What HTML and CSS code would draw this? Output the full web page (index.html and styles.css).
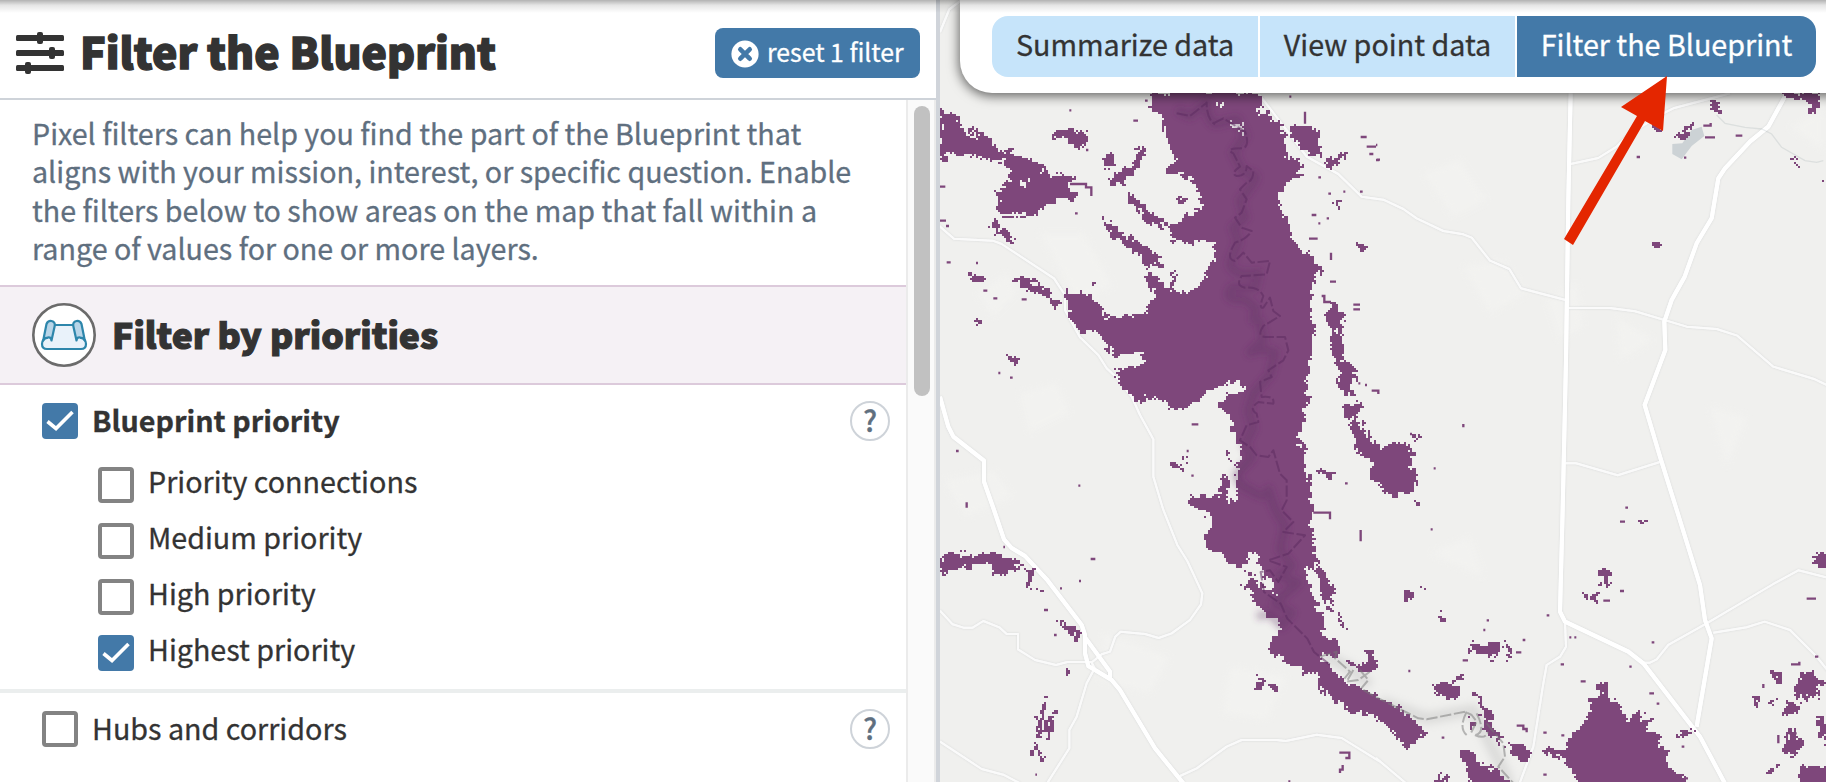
FILE: index.html
```
<!DOCTYPE html>
<html lang="en">
<head>
<meta charset="utf-8">
<title>Filter the Blueprint</title>
<link rel="stylesheet" href="styles.css">
</head>
<body>
<div class="app">
<aside class="sidebar">
  <header class="head">
    <svg class="sliders" viewBox="0 0 48 42"><g fill="#333"><rect y="3" width="48" height="6" rx="1.5"/><rect y="18" width="48" height="6" rx="1.5"/><rect y="33" width="48" height="6" rx="1.5"/><rect x="21" width="6" height="12" rx="2"/><rect x="33" y="15" width="6" height="12" rx="2"/><rect x="9" y="30" width="6" height="12" rx="2"/></g></svg>
    <h1>Filter the Blueprint</h1>
    <button class="reset"><svg viewBox="0 0 28 28"><circle cx="14" cy="14" r="13.6" fill="#fff"/><path d="M9.3 9.3l9.4 9.4M18.7 9.3l-9.4 9.4" stroke="#4379a8" stroke-width="4.6" stroke-linecap="round"/></svg><span>reset 1 filter</span></button>
  </header>
  <div class="scroller">
    <main class="content">
      <p class="intro">Pixel filters can help you find the part of the Blueprint that<br>aligns with your mission, interest, or specific question. Enable<br>the filters below to show areas on the map that fall within a<br>range of values for one or more layers.</p>
      <section class="group">
        <svg class="badge" viewBox="0 0 64 64"><circle cx="32" cy="32" r="30.7" fill="#fff" stroke="#6b6b6b" stroke-width="2.6"/><g stroke="#2d86ab" stroke-width="2.2" stroke-linejoin="round"><path fill="#e9f2fa" d="M20 22h24l5 13q5 1 5 6 0 5-5 5H15q-5 0-5-5 0-5 5-6z"/><path fill="#b8d5e8" d="M14.500 21q1.500-3.500 5-3 4 1 3.200 5l-3.200 14.500q-.5-4-4-3-3 0-4.300 3z"/><path fill="#b8d5e8" d="M49.500 21q-1.500-3.500-5-3-4 1-3.200 5l3.200 14.500q.5-4 4-3 3 0 4.300 3z"/></g></svg>
        <h2>Filter by priorities</h2>
      </section>
      <section class="filter on">
        <div class="row"><span class="box checked"><svg viewBox="0 0 36 36"><path d="M5.500 18.500l8.500 7L30.500 9"/></svg></span><strong>Blueprint priority</strong><span class="help">?</span></div>
        <ul>
          <li><span class="box"></span><span>Priority connections</span></li>
          <li><span class="box"></span><span>Medium priority</span></li>
          <li><span class="box"></span><span>High priority</span></li>
          <li><span class="box checked"><svg viewBox="0 0 36 36"><path d="M5.500 18.500l8.500 7L30.500 9"/></svg></span><span>Highest priority</span></li>
        </ul>
      </section>
      <section class="filter">
        <div class="row"><span class="box"></span><span class="label">Hubs and corridors</span><span class="help">?</span></div>
      </section>
    </main>
    <div class="track"><div class="thumb"></div></div>
  </div>
</aside>
<div class="map">
  <svg class="canvas" viewBox="940 0 886 782">
    <defs>
      <filter id="soft" x="-20%" y="-20%" width="140%" height="140%"><feGaussianBlur stdDeviation="9"/></filter>
      <g id="roads" fill="none" stroke-linejoin="round">
        <g class="minor">
          <path d="M30 96L58 28L95 0M28 678L72 716L188 722L215 732L372 835L405 885V930L450 1012L505 1065L530 1105L562 1135L605 1190L630 1245L670 1318V1430L700 1530L742 1635L772 1683L817 1780L813 1813L780 1860L725 1900L686 1914L645 1902L572 1895L556 1910L540 1955L515 1963L484 1988"/>
          <path d="M30 1832L68 1873L100 1883H128L160 1863L208 1882L230 1902H264V1948L315 1980L378 1995L412 1986H484L494 2005L470 2050L440 2150L418 2190V2245L345 2360M30 2225L155 2307L220 2324L270 2350M750 2328L800 2305L890 2240L935 2220H1040L1067 2223L1160 2204L1235 2214L1350 2285"/>
          <path d="M985 280L1035 345L1085 410L1130 470L1225 522L1295 590L1360 599L1420 627L1460 655L1540 693L1600 703L1625 713L1680 782L1738 807L1773 865L1910 901M1915 924H2040L2115 934L2270 980L2360 987L2422 1007L2530 1100L2655 1138L2700 1160M1922 492L2005 474L2060 440L2100 400L2200 340L2230 325L2400 280M1906 1390H1938L2063 1426L2190 1386"/>
          <path d="M1905 1868L1908 1940L1890 1970L1850 1995L1840 2050L1810 2240L1765 2360M2138 1988H2160L2180 1978L2215 1935L2330 1870L2530 1752L2605 1711L2700 1735M2350 1898L2450 1882L2504 1865L2580 1890L2660 1970L2700 2020M1338 2274L1440 2360"/>
        </g>
        <g class="major"><path d="M30 1190L55 1280L70 1310L162 1382V1445L192 1530L222 1618L245 1644L285 1668L350 1738L455 1875L465 1905V1960L475 1998L545 2040L570 2070L675 2245L760 2350M465 1912L540 2015V2040"/><path d="M1922 280L1915 600L1908 1080L1898 1530L1890 1835L1905 1865L2095 1955L2140 1990L2310 2210L2390 2360M2570 280L2515 380L2460 425L2385 505L2365 535L2345 655L2300 730L2264 830L2225 900L2203 965L2206 1050L2144 1215L2190 1370L2244 1542L2310 1755L2325 1860L2345 1915L2300 2180"/></g>
      </g>
    </defs>
    <rect x="940" width="886" height="782" fill="#f0f0ee"/>
    <g transform="translate(930) scale(.33333)">
      <g fill="#f4f4f2" opacity=".55" filter="url(#soft)"><path d="M330 700h130l90 160-110 40zM140 880l90-60 30 60-70 70zM270 1180l110-30 40 90-120 60zM40 1440l150-30 60 80-140 60zM520 1900l200 70-60 110-150-40zM1480 520l110-40 80 120-100 50zM1600 800l120-20 70 100-110 60zM2060 950l110 70-100 60zM1850 900l90-50 20 130-70 40zM2340 1220l110 30-60 150zM2580 380l100-50v120zM900 2000l170 30-60 130-130-20zM1500 1660l120-50 40 120z"/></g>
      <use href="#roads" class="casing"/><use href="#roads" class="fill"/>
      <path stroke="#2f4a58" stroke-opacity=".1" stroke-width="4" fill="none" d="M2360 345l25 25 60 12 50 5 30 15 30 40 70 40 35 5 20-5"/>
      <path fill="#ccd2d5" d="M2227 432v30l28 16 30-40 38-30-8-28-30 10-28 40z"/>
      <g class="shade"><path d="M1350 2105l140 50 140-25 60 120 30 60 40 110M1180 1965l80 40 60 50"/></g>
      <g class="land" id="land" fill="#7e477b">
        <path d="M668 275H990L985 335L1010 338L1045 378L1065 400L1068 470L1110 485L1115 518L1075 545L1040 580L1065 650L1085 700L1110 745L1150 770L1175 810L1145 850L1138 920L1155 980L1138 1060L1135 1200L1118 1235L1132 1262L1100 1310L1122 1340L1138 1440L1138 1540L1155 1660L1158 1695L1115 1710L1150 1790L1180 1850L1190 1905L1222 1925L1235 1980L1280 2005L1350 2095L1400 2120L1450 2160L1490 2200L1440 2230L1400 2215L1350 2140L1260 2130L1230 2085L1175 2060L1165 2010L1130 2030L1060 1980L1015 1950L1025 1920L1055 1905L1045 1868L985 1820L960 1775L930 1770L960 1735L950 1700L905 1695L870 1660L830 1640V1600L850 1560L830 1530L780 1520L785 1485L840 1490L870 1470L890 1410L900 1440L890 1500L920 1520L930 1340L905 1280L902 1240L850 1230L890 1200L900 1180L950 1165L910 1140L850 1165L780 1215L740 1238L690 1190L620 1200L580 1170L560 1110L620 1100L660 1080L610 1055L550 1070L515 1020L490 990L450 1010L410 930V880L460 872L515 920L530 960L645 940L670 900L680 860L780 880L830 820L860 770L850 725H730L715 705L775 640L820 630L800 550L745 515L712 530V500L735 485L715 440L700 370L685 335L655 330z"/>
        <path d="M30 315L90 370L110 400L180 430L225 465L290 485L345 520L435 530L440 545L400 550L435 575V610L395 595L340 620L300 650L230 650L200 640L215 600L195 590L205 565L250 550L225 480L180 475L100 460H50L45 500H30z"/>
        <path d="M110 385L150 390L190 425L170 425zM220 440L290 475L350 505L340 520L230 465zM200 640L215 680L250 710L235 722L185 685zM370 378L400 385L465 400V430L445 442L400 405L370 405zM510 475L545 470L550 500L530 500zM490 545H530L550 520L600 505L625 455L650 450L620 510L580 540L595 555L530 545zM590 570L640 620L710 670V685L650 665L590 595zM505 645L570 690L650 740L700 790L680 800L665 785L645 810L620 760L545 705zM715 670H745L730 690zM745 585L775 600L755 615zM1090 380H1135L1165 410L1150 430L1180 460L1160 475L1115 440L1080 405zM1185 490L1235 455L1245 470L1200 505zM1205 625L1240 600L1225 625zM1265 735L1320 730L1300 755z"/>
        <path d="M250 835H290L355 875L385 905L370 930L355 900L290 865zM108 820L145 825L158 845H120zM130 952H155L145 980zM240 1062H252L260 1090H240zM475 850l20-5-10 20zM655 820l40 20 10 30h-45zM728 815h10v70h-15zM1190 930L1215 910L1240 950L1225 1000L1240 1080L1260 1095L1282 1130L1260 1180L1245 1190L1225 1160L1230 1110L1205 1070L1210 1000L1190 970zM1245 1210H1295L1285 1250L1300 1285L1350 1350L1342 1460L1325 1455V1380L1280 1350L1262 1280L1265 1255L1245 1245z"/>
        <path d="M1338 1350H1360L1385 1325L1440 1340L1445 1390L1463 1430L1440 1480L1375 1490L1345 1450zM735 1390h20l10-10h20l-30 12v20h-20zM882 1340L900 1380L890 1385zM1160 1420l50-5v25z"/>
        <path d="M30 1665H180L210 1660L280 1700L255 1705L230 1725L195 1715L175 1685L130 1700L30 1725zM285 1710H312L300 1770L288 1760zM315 1768L355 1780L335 1783zM380 1857L435 1885L445 1910L432 1925L425 1900zM1165 1700L1205 1735L1215 1785L1200 1810L1225 1840L1270 1895L1220 1855L1175 1780zM375 2080L350 2105L340 2150L330 2210L320 2210L328 2150L343 2100L365 2080zM382 2118L364 2165L367 2195L345 2220L350 2160zM318 2225L315 2260L303 2270L306 2240zM333 2240h8v45h-8zM985 2025L1000 2060L980 2065zM1020 2050H1045V2080L1025 2070zM405 2022l15-15-4 18z"/>
        <path d="M1200 1970L1230 1960L1260 1995L1300 2015L1350 2005L1330 1950L1310 1950L1320 1985L1290 1990L1250 1985zM1165 2040L1280 2070L1340 2125L1400 2130L1350 2140H1260L1220 2100L1165 2065zM1375 2180L1440 2145L1490 2200L1460 2215L1440 2240L1415 2235zM1505 2050L1580 2045L1590 2095H1540zM1560 2025L1610 2030L1590 2040zM1615 2050L1650 2095L1695 2155L1680 2170L1710 2200L1720 2240L1680 2200L1660 2190V2150L1640 2095zM1610 2120L1635 2190L1625 2195zM1595 2250L1625 2255L1650 2295L1700 2310L1740 2360H1620V2310L1595 2280zM1530 2325h20v35h-25zM1730 2235L1795 2230L1800 2260L1785 2280L1740 2270z"/>
        <path d="M1615 1935L1660 1935L1695 1932L1710 1950L1685 1980L1650 1960L1620 1955zM1720 1928L1740 1935L1755 1970L1735 1972zM1422 1775L1455 1780L1440 1805H1425zM1475 1760L1495 1765H1475zM1533 1840L1545 1845V1870L1550 1880L1530 1860zM2010 1705H2035L2050 1735L2025 1760L2015 1740zM1990 1775L2010 1770L1995 1820zM1955 1785l15 15 10-15zM2120 1560h20l10 20zM1338 2140L1380 2150L1350 2160z"/>
        <path d="M2002 2055L2035 2050L2025 2085L2055 2100L2100 2165L2130 2135L2138 2170L2175 2160L2150 2190L2185 2205V2240L2210 2245V2300L2260 2320V2360H1940L1930 2320L1910 2280L1840 2265V2245L1920 2255V2220L1970 2170L1980 2105L2010 2095zM2240 2205L2280 2190L2300 2180L2270 2205zM2525 2015L2560 2030L2540 2045L2525 2030zM2610 2015L2650 2015L2665 2050V2090L2630 2105L2585 2070L2610 2040zM2560 2090L2585 2115L2610 2110L2590 2145L2550 2140L2570 2120zM2475 2090h8l10 20-15 20zM2500 2110l40-10v15zM2660 2150L2690 2160V2230L2665 2190zM2580 2180L2600 2200L2610 2230L2640 2215L2600 2270L2560 2255zM2600 2310L2640 2290L2690 2300V2360H2620zM2520 2310L2545 2295L2530 2330L2505 2325zM2650 1680L2670 1665H2690V1705L2660 1695zM2670 2040h20v20h-15z"/>
        <path d="M2555 275H2665V345H2645L2630 300H2575zM2337 300H2365L2375 340L2340 325zM2280 375H2295L2260 420L2240 420zM2170 380h20v15h-18zM2655 530l40 40v-15zM2160 718h20l5 15-10 15zM2570 465l40 25h-10zM2380 345l12 12zM1450 1300h20v18h-8zM1455 1490l10 15-10 20z"/>
        <path class="gap" d="M855 320l30-10v20zM870 355l65 15v35zM275 540h25v12h-25zM955 1655l35 20 10 50 40 20v35l-35-5-50-70zM1170 1962L1235 1970L1290 2010L1345 2030V2090L1290 2065L1240 2040zM1120 1708h25l65 200h-20zM1378 1445l90-70v10zM1405 1480l55-15v5z"/>
      </g>
      <path class="specks" d="M418 331h6M610 362h14M645 302h8M1078 290h6M1125 335v36M1292 411h18M1310 440h28M1318 462h12M1338 480h10M1165 532h8M1195 581h8M1290 575h8M1240 575h6M1165 670h6M1190 655h7M1145 645h14M1137 716h26M1203 758v22M420 552h48v10h16v26M30 560h16M30 662h18M48 678h9M50 787h12M138 789h6M275 898h15M160 872h12M190 895h12M205 1119h6M240 1133h8M445 1457h6M770 1353h6M784 1427h7M785 1273h20M78 1353h8M110 1507v16M435 640h8M468 450h7M390 1765h6M447 1743h6M482 1677h14M342 1830h12M220 1641h5M372 1905h8M1600 1272v10M1511 1405h6M1502 1588h6M1440 1302h6M1285 1150h6M1305 1155h6M1270 914h20M1270 928h20M1200 845h18M1175 888h8v18h20M1292 1590v34M1325 1172h20v10M1150 1538h50v20M1245 1450h8M2120 471h10M2262 473h7M2320 377h22v-8M2325 412h30M2417 407h20M1338 435h4M1341 479h9M2086 1523h8M2070 1565h15M1850 1846h8M1918 1912h6M1933 1912h6M2098 2000h7M2165 1927h8M2158 2080h14M2180 2111h8M1952 2044h15M1892 1993h10M1840 2198h10M1894 2206h9M1840 2324h10M1535 2213h8M1435 2013h6M1598 1981h16M1670 1861h7M1660 1890h6M1758 1957h16M1778 1920h8M2070 1773h12M2020 1802h20M2630 1796h28M2583 1993h25v-8M2655 1970h10M2500 2052v12M2545 2205v25M2576 2200h24M2266 2335h8M2255 2240h8M1760 2177h20v10h10v10M1228 2258h30v16h-12M1238 2295v14h-8v10M1075 2344h6M316 2324h5"/>
      <g class="river" fill="none">
        <path class="halo" filter="url(#soft)" d="M740 330l40 18 50-40q0 50 25 65l65-15 25 50-35 50 30 60q50 0 30 30l-40 55 15 50-35 30 15 40-25 70q15 40 85 25l-10 45h-70q-20 30 10 35 40-5 55 25 15-5 0 35 25 0 20 20l10 40-40 40 35-10 40 10-15 65-50 60-15 50 15 50-25 50 20 40-45 50q0 30 45 50 45 30 50-5l20 60 30 50-15 70 35 50-40 30 60 20-70 60 50 30-30 40-35-35-40 5"/>
        <path d="M740 340l40 8 50-40q0 50 25 65M850 370l30-15 65 40q15 40-5 50-60 0-30 15l20 40q-30 20-10 28 30 0 30-30l20 15q0 30-20 35l-20 20 20 30-15 40-20 15 20 30 30 10q-15 25-50 35-30 50 0 55l25-25 25 30 55-5-10 40-75 5q-20 30 10 35 40-5 55 25-15 40 0 35l20-30 10 40 20 15-50 30q-20 30 5 33h60l10 40-15 30-45 30 10 20-35 15 5 45q40-5 35 20l-45-5q-30 20-5 35l5 25-35 10-20 45 30 20 20 25 35 5 15-20 20 70 20 20v60l-15 30 35 35-30 30 65 10-50 55-60 20 55 20-25 45-25-35-28 5 10 60 50 35 20 45 60 60 20 40 50 40"/>
        <path class="grey" d="M1170 1970l50-15-5 20 45 40-20 25M1270 2010l-20 35 35-5 35-25M1290 2010l25 30-25 30M1300 2070l35 20 130 65 25 3 115-23 20 10 15 20-20 40M1610 2135q-25 50 0 70M1640 2140q30 60-5 65M1635 2205q30 15 40-10M1670 2170l50 60 5 40-20 30 55 60"/>
      </g>
    </g>
  </svg>
  <nav class="tabs"><a>Summarize data</a><a>View point data</a><a class="active">Filter the Blueprint</a></nav>
  <svg class="arrow" viewBox="0 0 104 170"><path fill="#e42600" d="M103 0L99 55L81 45L9 169L0 163L73 40L57 31z"/></svg>
</div>
<div class="topshade"></div>
</div>
<script src="map.js"></script>
</body>
</html>
```
FILE: map.js
```
// Turns the priority areas into raster-like cells with irregular edges.
(function () {
  var land = document.getElementById('land');
  var CELL = 6, W = 450, H = 395;
  var c = document.createElement('canvas');
  c.width = W; c.height = H;
  var g = c.getContext('2d');
  g.scale(1 / CELL, 1 / CELL);
  land.querySelectorAll('path').forEach(function (p) {
    g.globalCompositeOperation = p.classList.contains('gap') ? 'destination-out' : 'source-over';
    g.fill(new Path2D(p.getAttribute('d')));
  });
  var data = g.getImageData(0, 0, W, H).data;
  function hash(x, y, s) {
    var v = Math.sin(x * 127.1 + y * 311.7 + s * 74.7) * 43758.5453;
    return (v - Math.floor(v)) * 2 - 1;
  }
  function noise(x, y, s) {
    return hash(Math.floor(x / 3), Math.floor(y / 3), s) * 1.5 + hash(x, y, s + 5) * 0.6;
  }
  function filled(x, y) {
    var sx = Math.round(x + noise(x, y, 1)), sy = Math.round(y + noise(x, y, 2));
    sx = Math.max(0, Math.min(W - 1, sx));
    sy = Math.max(0, Math.min(H - 1, sy));
    return data[(sy * W + sx) * 4 + 3] > 100;
  }
  var d = '';
  for (var y = 0; y < H; y++) {
    var start = -1;
    for (var x = 0; x <= W; x++) {
      var on = x < W && filled(x, y);
      if (on && start < 0) start = x;
      if (!on && start >= 0) {
        d += 'M' + start * CELL + ' ' + y * CELL + 'h' + (x - start) * CELL + 'v' + CELL + 'h' + (start - x) * CELL + 'z';
        start = -1;
      }
    }
  }
  var path = document.createElementNS('http://www.w3.org/2000/svg', 'path');
  path.setAttribute('d', d);
  land.replaceChildren(path);
})();
```
FILE: styles.css
```
* { box-sizing: border-box; }
body { margin: 0; font-family: "Noto Sans CJK SC", "Noto Sans", sans-serif; color: #333; font-size: 28.7px; -webkit-text-stroke: .3px; }
.app { position: relative; display: flex; width: 1826px; height: 782px; overflow: hidden; }
.sidebar { width: 940px; border-right: 4px solid #d0d4da; display: flex; flex-direction: column; background: #fff; }
.head { height: 100px; border-bottom: 2px solid #ced3d9; display: flex; align-items: center; padding: 6px 16px 0; flex: none; }
.sliders { width: 48px; height: 42px; margin-top: 2px; }
h1 { margin: -5px 0 0 16px; font-size: 42.8px; font-weight: 900; line-height: 60px; white-space: nowrap; -webkit-text-stroke: 1.4px #333; }
.reset { margin: 1px 0 0 auto; width: 205px; height: 50px; padding: 0 16px; border: 0; border-radius: 8px; background: #4379a8; color: #fff; font: 24.8px/44px "Noto Sans CJK SC", sans-serif; -webkit-text-stroke: .3px #fff; display: flex; align-items: center; gap: 8px; white-space: nowrap; }
.reset svg { width: 28px; height: 28px; margin-top: 2px; flex: none; }
.reset span { margin-top: -4px; }
.scroller { display: flex; flex: 1; min-height: 0; }
.content { width: 906px; overflow: hidden; }
.track { width: 30px; border-left: 2px solid #ebebeb; border-right: 2px solid #ebebeb; background: #fafafa; padding: 6px; }
.thumb { width: 16px; height: 290px; border-radius: 8px; background: #c1c1c1; }
.intro { margin: 0; padding: 14px 0 0 32px; height: 185px; font-size: 28.65px; line-height: 38.33px; color: #5f6f7f; white-space: nowrap; }
.group { height: 100px; border-top: 2px solid #dccadb; border-bottom: 2px solid #dccadb; background: #f5f1f5; display: flex; align-items: center; padding-left: 32px; }
.badge { width: 64px; height: 64px; }
h2 { margin: 0 0 3px 16px; font-size: 35.5px; font-weight: 900; line-height: 50px; -webkit-text-stroke: 1.1px #333; }
.filter { padding: 18px 16px 0 42px; }
.filter.on { height: 308px; border-bottom: 4px solid #ebeeee; }
.row { height: 36px; display: flex; align-items: center; }
.row strong, .row .label { margin: -2px 0 0 14px; line-height: 36px; }
.box { width: 36px; height: 36px; border: 4px solid #838383; border-radius: 4px; background: #fff; flex: none; display: block; }
.checked { background: #4379a8; border: 0; }
.checked path { fill: none; stroke: #fff; stroke-width: 3.6; }
.help { margin-left: auto; width: 40px; height: 40px; border: 2px solid #ced3d9; border-radius: 50%; text-align: center; line-height: 34px; color: #5f6f7f; font-weight: 500; }
ul { list-style: none; margin: 28px 0 0; padding: 0 0 0 56px; display: grid; gap: 20px; }
li { height: 36px; display: flex; gap: 14px; line-height: 27.500px; }
.map { position: relative; width: 886px; height: 782px; background: #f0f0ee; overflow: hidden; }
.canvas { display: block; width: 886px; height: 782px; }
#roads .minor { stroke-width: 6; stroke: #fafafa; }
#roads .major { stroke-width: 12; stroke: #fff; }
.casing { filter: drop-shadow(0 0 3px #d5d7d8); }
.land { shape-rendering: crispEdges; }
.specks { fill: none; stroke: #7e477b; stroke-width: 7; }
.river path { stroke: #5d2b60; stroke-opacity: .55; stroke-width: 6; stroke-dasharray: 34 8; stroke-linejoin: round; }
.river .halo { stroke: #5d2b60; stroke-opacity: .3; stroke-width: 26; stroke-dasharray: none; }
.river .grey { stroke: #777; stroke-opacity: .5; }
.shade { fill: none; stroke: #aaa; stroke-width: 34; opacity: .3; filter: blur(12px); }
.tabs { position: absolute; left: 20px; top: 0; width: 900px; height: 93px; padding: 16px 0 0 32px; background: #fff; border-radius: 0 0 0 32px; box-shadow: 0 2px 12px 1px rgba(0,0,0,.6); display: flex; gap: 2px; }
.tabs a { height: 61px; line-height: 55px; background: #c6e4fa; text-align: center; width: 266px; white-space: nowrap; }
.tabs a:first-child { border-radius: 16px 0 0 16px; }
.tabs a:nth-child(2) { width: 255px; }
.tabs a.active { width: 299px; background: #4379a8; color: #fff; border-radius: 0 16px 16px 0; }
.arrow { position: absolute; left: 624px; top: 76px; width: 104px; height: 170px; }
.topshade { position: absolute; left: 0; right: 0; top: 0; height: 13px; background: linear-gradient(rgba(0,0,0,.3), rgba(0,0,0,.1) 40%, rgba(0,0,0,0)); }
```
